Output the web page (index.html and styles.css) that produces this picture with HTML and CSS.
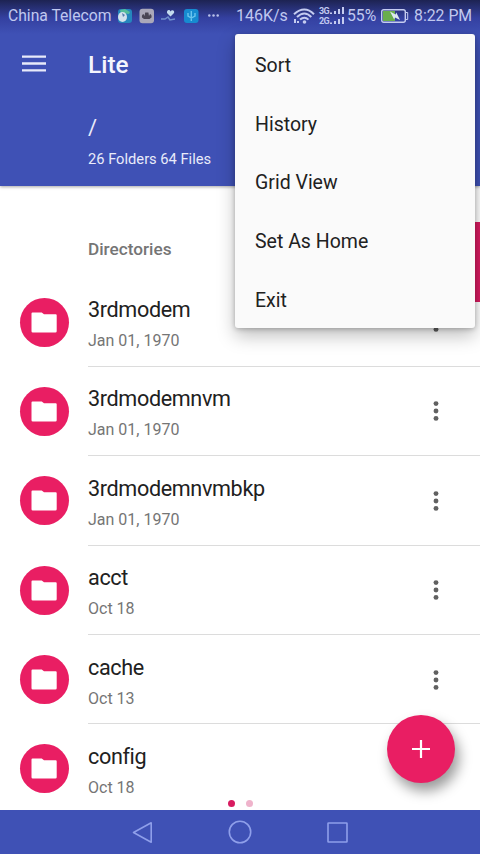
FILE: index.html
```html
<!DOCTYPE html>
<html lang="en">
<head>
<meta charset="utf-8">
<title>Lite</title>
<link rel="stylesheet" href="styles.css">
</head>
<body>
<svg class="defs" aria-hidden="true">
  <symbol id="folder" viewBox="0 0 26 21"><path d="M1.500.5h9.200l2.300 1.700h11.700q1 0 1 1v16q0 1.300-1.300 1.300H1.800Q.5 20.500.5 19.200V1.500q0-1 1-1z" fill="#fff"/></symbol>
  <symbol id="more" viewBox="0 0 6 20"><g fill="#616161"><circle cx="3" cy="2.6" r="2.45"/><circle cx="3" cy="10" r="2.45"/><circle cx="3" cy="17.4" r="2.45"/></g></symbol>
</svg>
<div class="screen">
  <header class="header">
    <div class="status">
      <span class="carrier">China Telecom</span>
      <svg class="notes" width="104" height="16" viewBox="0 0 104 16">
        <rect x="1" y="1" width="14" height="14" rx="3" fill="#2586bd"/><path d="M3 2l5-1 5 3-1 2-8-1z" fill="#55bd9b"/><ellipse cx="5.5" cy="9" rx="4.5" ry="5" fill="#d3e1ec"/><path d="M5 5l3 2-2 2z" fill="#547cac"/>
        <rect x="22.500" y=".8" width="14.500" height="14.400" rx="3" fill="#aaa8b9"/><path d="M25 9.500q-.5-3 1.500-3.500l1 2 .7-3.500h3.200l.6 3.500 1-2q2 .5 1.500 3.500l-2 1.500h-5.500z" fill="#4a4655"/>
        <path d="M44 11h4l3-2 2 3 5-1" fill="none" stroke="#7190cc" stroke-width="1.500"/><path d="M53.500 8.500L50 5c-.5-3 2.500-4 3.500-1.500C55 1 58 2.500 57 5z" fill="#c3dbee"/>
        <rect x="67" y="1" width="14.500" height="14" rx="3" fill="#168bd0"/><path d="M74.300 3v10M71 5v3l3.300 2L78 8V5" fill="none" stroke="#69c4ee" stroke-width="1.400"/>
        <g fill="#b9c1e9"><circle cx="92.300" cy="7.500" r="1.250"/><circle cx="96.500" cy="7.500" r="1.250"/><circle cx="100.700" cy="7.500" r="1.250"/></g>
      </svg>
      <span class="speed">146K/s</span>
      <svg class="wifi" width="22" height="18" viewBox="0 0 22 18">
        <g fill="none" stroke="#c5ccf0" stroke-width="2"><path d="M1 7.200Q11.500-2.200 21 7.200M4 10Q11.500 3 18.300 10M7 12.600Q11.500 8.800 15.500 12.600"/></g><circle cx="11.500" cy="15" r="1.800" fill="#c5ccf0"/><path d="M1 12h2v4H1zM4 14h2v2H4z" fill="#c5ccf0"/>
      </svg>
      <span class="cell">
        <span class="gen">3G<br>2G</span>
        <svg width="15" height="20" viewBox="0 0 15 20" fill="#c5ccf0"><path d="M0 6.500h2V8H0zM4 5h2v3H4zM8 3h2v5H8zM12 1h2v7h-2zM0 16.500h2V18H0zM4 15h2v3H4zM8 13h2v5H8zM12 11h2v7h-2z"/></svg>
      </span>
      <span class="percent">55%</span>
      <svg class="battery" width="28" height="14" viewBox="0 0 28 14"><rect x=".7" y=".7" width="23.600" height="12.600" rx="2" fill="none" stroke="#c5ccf0" stroke-width="1.400"/><path d="M24.500 3.500h2.200v7h-2.200z" fill="none" stroke="#c5ccf0"/><path d="M2 2h12v10H2z" fill="#69ad4d"/><path d="M9 2.500l5.500 3 .8-2L19 11l-5-2.500-.8 2z" fill="#dce8ef"/></svg>
      <span class="clock">8:22 PM</span>
    </div>
    <div class="toolbar">
      <svg class="burger" width="24" height="17" viewBox="0 0 24 17"><path d="M0 1.600h24M0 8.500h24M0 15.400h24" stroke="#e8eafa" stroke-width="2.400"/></svg>
      <h1>Lite</h1>
    </div>
    <div class="path">/</div>
    <div class="summary">26 Folders 64 Files</div>
  </header>
  <main class="list">
    <h2>Directories</h2>
    <div class="row"><div class="avatar"><svg><use href="#folder"/></svg></div><div class="info"><div class="name">3rdmodem</div><div class="date">Jan 01, 1970</div><svg class="more"><use href="#more"/></svg></div></div>
    <div class="row"><div class="avatar"><svg><use href="#folder"/></svg></div><div class="info"><div class="name">3rdmodemnvm</div><div class="date">Jan 01, 1970</div><svg class="more"><use href="#more"/></svg></div></div>
    <div class="row"><div class="avatar"><svg><use href="#folder"/></svg></div><div class="info"><div class="name">3rdmodemnvmbkp</div><div class="date">Jan 01, 1970</div><svg class="more"><use href="#more"/></svg></div></div>
    <div class="row"><div class="avatar"><svg><use href="#folder"/></svg></div><div class="info"><div class="name">acct</div><div class="date">Oct 18</div><svg class="more"><use href="#more"/></svg></div></div>
    <div class="row"><div class="avatar"><svg><use href="#folder"/></svg></div><div class="info"><div class="name">cache</div><div class="date">Oct 13</div><svg class="more"><use href="#more"/></svg></div></div>
    <div class="row"><div class="avatar"><svg><use href="#folder"/></svg></div><div class="info"><div class="name">config</div><div class="date">Oct 18</div></div></div>
  </main>
  <nav class="navbar">
    <svg width="21" height="23" viewBox="0 0 21 23"><path d="M19.200 1.800v19.400L1.500 11.500z"/></svg>
    <svg width="24" height="24" viewBox="0 0 24 24"><circle cx="12" cy="12" r="10.700"/></svg>
    <svg width="21" height="21" viewBox="0 0 21 21"><rect x="1" y="1" width="19" height="19" rx=".5"/></svg>
  </nav>
  <div class="scrollbar"></div>
  <div class="pager"><i></i><i></i></div>
  <div class="fab"><svg width="18" height="18" viewBox="0 0 18 18"><path d="M9 0v18M0 9h18" stroke="#fff" stroke-width="2.200"/></svg></div>
  <div class="menu">
    <div>Sort</div><div>History</div><div>Grid View</div><div>Set As Home</div><div>Exit</div>
  </div>
</div>
</body>
</html>
```
FILE: styles.css
```css
* { box-sizing: border-box; }
body { margin: 0; font-family: Roboto, sans-serif; }
h1, h2 { margin: 0; }
.defs { position: absolute; width: 0; height: 0; }
.screen { position: relative; width: 480px; height: 854px; overflow: hidden; background: #fff; display: flex; flex-direction: column; }
.header { position: relative; height: 186px; flex: none; color: #e9ebfa; background: linear-gradient(#1d2352 0, #3440a0 18px, #3f51b5 34px); box-shadow: 0 1px 3px rgba(0,0,0,.35); }
.status { display: flex; align-items: center; height: 31px; padding: 0 8px; font-size: 17px; line-height: 31px; color: #c0c8ef; white-space: nowrap; }
.carrier { flex: none; width: 109px; font-size: 15.700px; }
.notes { flex: none; }
.speed { flex: none; width: 52px; margin-left: 15px; font-size: 16px; }
.wifi { flex: none; margin-left: 5px; }
.cell { display: flex; flex: none; align-items: center; margin-left: 4px; }
.gen { width: 11px; font-size: 9px; font-weight: 700; line-height: 10px; letter-spacing: -.6px; }
.percent { flex: none; width: 30px; margin-left: 2px; font-size: 15.700px; }
.battery { flex: none; margin-left: 4px; }
.clock { flex: none; margin-left: 5px; font-size: 15.800px; }
.toolbar { display: flex; align-items: center; height: 68px; padding-left: 22px; }
.burger { margin-right: 42px; margin-bottom: 4px; }
h1 { font-size: 24.400px; font-weight: 500; line-height: 30px; color: #f4f5fd; }
.path { margin: 15px 0 0 88px; font-size: 22px; line-height: 28px; }
.summary { margin: 8px 0 0 88px; font-size: 14.700px; line-height: 18px; }
.list { flex: 1; min-height: 0; overflow: hidden; }
h2 { margin: 53px 0 17.500px 88px; font-size: 17.200px; font-weight: 500; line-height: 21px; color: #757575; }
.row { display: flex; height: 89.400px; padding-left: 19.500px; }
.avatar { display: flex; flex: none; align-items: center; justify-content: center; width: 49px; height: 49px; margin-top: 20px; border-radius: 50%; background: #e91e63; }
.avatar svg { width: 26px; height: 21px; }
.info { display: grid; grid-template-columns: 1fr 6px; grid-template-rows: 31px 31px; flex: 1; margin-left: 19.500px; padding: 16.500px 41px 0 0; border-bottom: 1px solid #dcdcdc; }
.name { font-size: 21.600px; letter-spacing: -.36px; line-height: 31px; color: #212121; }
.date { grid-row: 2; font-size: 16px; line-height: 31px; color: #757575; }
.more { grid-column: 2; grid-row: 1 / 3; align-self: center; width: 6px; height: 20px; margin-bottom: 6px; }
.navbar { display: flex; align-items: center; justify-content: space-between; flex: none; height: 44px; padding: 0 132px; background: #3f51b5; }
.navbar svg { fill: none; stroke: #8f9fea; stroke-width: 1.600; stroke-linejoin: round; }
.scrollbar { position: absolute; top: 222px; right: 0; width: 6px; height: 80px; background: #d81b60; }
.pager { position: absolute; left: 227.500px; top: 800px; display: flex; gap: 11px; }
.pager i { width: 7px; height: 7px; border-radius: 50%; background: #d81b60; }
.pager i + i { background: #efb3cb; }
.fab { position: absolute; left: 387px; top: 715px; display: flex; align-items: center; justify-content: center; width: 68px; height: 68px; border-radius: 50%; background: #e91e63; box-shadow: 4px 8px 13px rgba(0,0,0,.4); }
.menu { position: absolute; left: 235px; top: 34px; width: 240px; height: 294px; padding-left: 20px; border-radius: 3px; background: #fafafa; box-shadow: 0 8px 18px rgba(0,0,0,.25), 0 1px 5px rgba(0,0,0,.25); }
.menu div { height: 58.700px; font-size: 19.500px; line-height: 63px; color: #212121; }
```
